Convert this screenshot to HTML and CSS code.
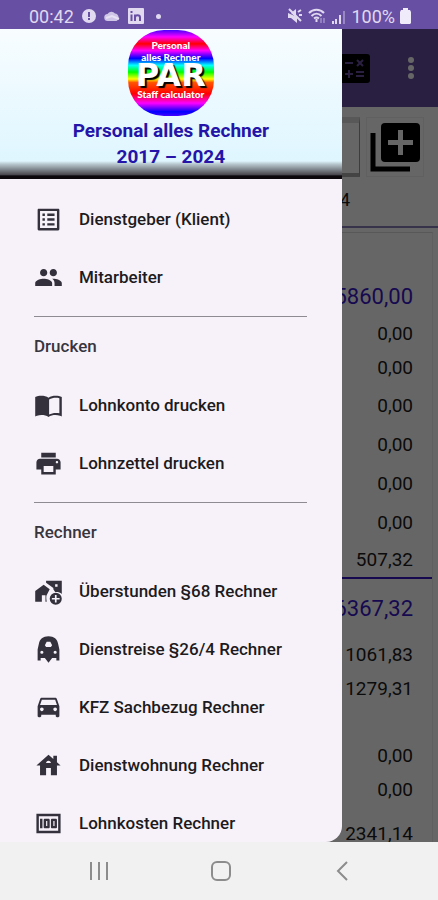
FILE: index.html
```html
<!DOCTYPE html>
<html lang="de">
  <head>
    <meta charset="UTF-8" />
    <meta name="viewport" content="width=device-width, initial-scale=1.0" />
    <title>Personal alles Rechner</title>
    <link rel="stylesheet" href="styles.css">
  </head>
  <body>
    <!-- status bar -->
    <header class="status">
      <span class="status-text">00:42</span>
      <svg width="14" height="14" viewBox="0 0 14 14"><circle cx="7" cy="7" r="7" fill="#e0d9f0"/><path d="M7 3v5M7 9v2" stroke="#6750a4" stroke-width="2"/></svg>
      <svg width="16" height="12" viewBox="0 0 16 12"><path d="M4 11a3.500 3.500 0 0 1-.5-7A4.500 4.500 0 0 1 11 3.500 4 4 0 0 1 12.500 11z" fill="#cfc5e6"/><path d="M2 8l6-2 7 3" stroke="#e6e0f3" stroke-width="2" fill="none"/></svg>
      <svg width="16" height="16" viewBox="0 0 16 16"><rect width="16" height="16" rx="1" fill="#e0d9f0"/><path d="M3.500 6.500V13M7 13V6.500M7 9.500c0-3 5-3 5 0V13M3.500 3v2" stroke="#6750a4" stroke-width="2" fill="none"/></svg>
      <span class="status-dot"></span>
      <span class="status-space"></span>
      <svg width="16" height="16" viewBox="0 0 16 16" fill="#e0d9f0"><path d="M1 5h3l5-4v8L4 5zM1 5v5h3l6 5V9z"/><path d="M2 1l12 12M11 4l3-2M12 7h3" stroke="#e0d9f0" stroke-width="2"/></svg>
      <svg width="18" height="16" viewBox="0 0 18 16" fill="none" stroke="#e0d9f0" stroke-width="2"><path d="M1 5c4-4.500 11-4.500 15 0M3.500 8c3-3 7-3 10 0M6 10.500c2-1.500 3-1.500 5 0"/><path d="M8.500 11v3"/><path d="M13 10v5M16 10v5" stroke-width="1" opacity=".7"/></svg>
      <svg width="15" height="15" viewBox="0 0 15 15" fill="#e0d9f0"><path d="M1 12h2v3H1zM4 10h2v5H4zM8 6h2v9H8z"/><path d="M12 2h2v13h-2z" opacity=".4"/></svg>
      <span class="status-text">100%</span>
      <svg width="11" height="16" viewBox="0 0 11 16" fill="#f0ebfa"><path d="M3 0h5v2h2l1 2v11l-1 1H1l-1-1V4l1-2h2z"/></svg>
    </header>

    <main class="screen">
      <!-- page under the drawer -->
      <div class="page">
        <div class="appbar">
          <button class="icon-btn" aria-label="Rechner">
            <svg width="31" height="29" viewBox="0 0 31 29"><rect width="31" height="29" rx="3"/><path d="M6 9h8M18 6l6 6M24 6l-6 6M6 20h8M10 16v8M17 18h8M17 22h8" stroke="#6750a4" stroke-width="2"/></svg>
          </button>
          <button class="icon-btn" aria-label="Menü">
            <svg width="6" height="22" viewBox="0 0 6 22" fill="#fff"><circle cx="3" cy="3" r="3"/><circle cx="3" cy="11" r="3"/><circle cx="3" cy="19" r="3"/></svg>
          </button>
        </div>
        <div class="tools">
          <input class="search" type="text" aria-label="Suche">
          <button class="add" aria-label="Hinzufügen">
            <svg width="50" height="50" viewBox="0 0 50 50"><rect x="11" y="1" width="39" height="39" rx="4"/><path d="M3 11v36h37" fill="none" stroke="#000" stroke-width="5"/><path d="M30.500 8v25M18 20.500h25" stroke="#fff" stroke-width="5"/></svg>
          </button>
        </div>
        <p class="year">2024</p>
        <div class="sheet">
          <table>
            <tr class="total"><td>5860,00</td></tr>
            <tr class="compact"><td>0,00</td></tr>
            <tr class="compact"><td>0,00</td></tr>
          </table>
          <table class="extras">
            <tr><td>0,00</td></tr>
            <tr><td>0,00</td></tr>
            <tr><td>0,00</td></tr>
            <tr><td>0,00</td></tr>
            <tr><td>507,32</td></tr>
          </table>
          <table>
            <tr class="total sum"><td>6367,32</td></tr>
            <tr class="compact"><td>1061,83</td></tr>
            <tr class="compact"><td>1279,31</td></tr>
          </table>
          <table class="taxes">
            <tr class="compact"><td>0,00</td></tr>
            <tr class="compact"><td>0,00</td></tr>
          </table>
          <table class="payout">
            <tr class="compact"><td>2341,14</td></tr>
          </table>
        </div>
      </div>
      <div class="scrim"></div>

      <!-- drawer -->
      <aside class="drawer">
        <div class="drawer-head">
          <div class="logo">
            <span class="logo-small">Personal</span>
            <span class="logo-small">alles Rechner</span>
            <span class="logo-big">PAR</span>
            <span class="logo-small">Staff calculator</span>
          </div>
          <h1 class="title">Personal alles Rechner<br>2017 – 2024</h1>
        </div>
        <nav class="menu">
          <a class="item" href="#">
            <svg class="icon" viewBox="0 0 24 24"><path d="M19 5v14H5V5h14m1.100-2H3.900c-.5 0-.9.4-.9.9v16.200c0 .4.4.9.9.9h16.200c.4 0 .9-.5.9-.9V3.900c0-.5-.5-.9-.9-.9zM11 7h6v2h-6V7zm0 4h6v2h-6v-2zm0 4h6v2h-6zM7 7h2v2H7zm0 4h2v2H7zm0 4h2v2H7z"/></svg>
            Dienstgeber (Klient)
          </a>
          <a class="item" href="#">
            <svg class="icon" viewBox="0 0 24 24"><path d="M16 11c1.660 0 2.990-1.340 2.990-3S17.660 5 16 5c-1.660 0-3 1.340-3 3s1.340 3 3 3zm-8 0c1.660 0 2.990-1.340 2.990-3S9.660 5 8 5C6.340 5 5 6.340 5 8s1.340 3 3 3zm0 2c-2.330 0-7 1.170-7 3.500V19h14v-2.500c0-2.330-4.670-3.500-7-3.500zm8 0c-.29 0-.62.02-.97.05 1.160.84 1.970 1.970 1.970 3.450V19h6v-2.500c0-2.330-4.670-3.500-7-3.500z"/></svg>
            Mitarbeiter
          </a>

          <h2 class="group">Drucken</h2>
          <a class="item" href="#">
            <svg class="icon" viewBox="0 0 24 24"><path fill-rule="evenodd" d="M12 5.500C9 3.500 4 3.500 1 5v16c.5-.3 1-.5 1.500-.6 3-.9 7-.7 9.500 1.100 2.500-1.800 6.500-2 9.500-1.100.5.1 1 .3 1.500.6V5c-3-1.500-8-1.500-11 .5zM21 18.500c-2.500-.7-6-.5-8.500 1V7c2.500-1.500 6-1.700 8.500-1z"/></svg>
            Lohnkonto drucken
          </a>
          <a class="item" href="#">
            <svg class="icon" viewBox="0 0 24 24"><path d="M19 8H5c-1.660 0-3 1.340-3 3v6h4v4h12v-4h4v-6c0-1.660-1.340-3-3-3zm-3 11H8v-5h8v5zm3-7c-.55 0-1-.45-1-1s.45-1 1-1 1 .45 1 1-.45 1-1 1zm-1-9H6v4h12V3z"/></svg>
            Lohnzettel drucken
          </a>

          <h2 class="group">Rechner</h2>
          <a class="item" href="#">
            <svg class="icon" viewBox="0 0 24 24"><path d="M1 11.500l7-5 5 3.700-2 3.800c-1 1-1 3-.5 6.500H9.500V15h-3v5.500H1z"/><path fill-rule="evenodd" d="M10 3h13v11c-1.500-1.300-3.500-1.800-5.500-1.500L16 10.200V9L10 4.700zM17.500 6v2h2V6z"/><path fill-rule="evenodd" d="M18 13a5 5 0 1 0 0 10 5 5 0 0 0 0-10zm-.7 1.800h1.400v2.500h2.500v1.400h-2.500v2.500h-1.400v-2.500h-2.500v-1.400h2.500z"/></svg>
            Überstunden §68 Rechner
          </a>
          <a class="item" href="#">
            <svg class="icon" viewBox="0 0 24 24"><path fill-rule="evenodd" d="M12 1c-4.500 0-7.500 2.500-8 6.500L3 12v9h2.500v-2H9l3 4 3-4h3.500v2H21v-9l-1-4.500C19.500 3.500 16.500 1 12 1zM10.500 5.500h3l1.500 3-1 1.500h-4L9 8.500zM6.500 13a1.300 1.300 0 1 1 0 2.600 1.300 1.300 0 0 1 0-2.600zm11 0a1.300 1.300 0 1 1 0 2.600 1.300 1.300 0 0 1 0-2.600z"/></svg>
            Dienstreise §26/4 Rechner
          </a>
          <a class="item" href="#">
            <svg class="icon" viewBox="0 0 24 24"><path d="M18.920 5.010C18.720 4.420 18.160 4 17.500 4h-11c-.66 0-1.210.42-1.420 1.010L3 11v8c0 .55.45 1 1 1h1c.55 0 1-.45 1-1v-1h12v1c0 .55.45 1 1 1h1c.55 0 1-.45 1-1v-8l-2.080-5.990zM6.500 15c-.83 0-1.500-.67-1.500-1.500S5.670 12 6.500 12s1.500.67 1.500 1.500S7.330 15 6.500 15zm11 0c-.83 0-1.500-.67-1.500-1.500s.67-1.500 1.500-1.500 1.500.67 1.500 1.500-.67 1.500-1.500 1.500zM5 10l1.500-4.500h11L19 10H5z"/></svg>
            KFZ Sachbezug Rechner
          </a>
          <a class="item" href="#">
            <svg class="icon" viewBox="0 0 24 24"><path d="M19 9.300V4h-3v2.600L12 3 2 12h3v8h5v-6h4v6h5v-8h3l-3-2.700zm-9 .7c0-1.100.9-2 2-2s2 .9 2 2h-4z"/></svg>
            Dienstwohnung Rechner
          </a>
          <a class="item" href="#">
            <svg class="icon" viewBox="0 0 24 24"><path d="M15 16h3c.55 0 1-.45 1-1V9c0-.55-.45-1-1-1h-3c-.55 0-1 .45-1 1v6c0 .55.45 1 1 1zm1-6h1v4h-1v-4zm-7 6h3c.55 0 1-.45 1-1V9c0-.55-.45-1-1-1H9c-.55 0-1 .45-1 1v6c0 .55.45 1 1 1zm1-6h1v4h-1v-4zM5 8h2v8H5zM2 4v16h20V4H2zm2 14V6h16v12H4z"/></svg>
            Lohnkosten Rechner
          </a>
        </nav>
      </aside>
    </main>

    <!-- system buttons -->
    <footer class="sysnav">
      <button class="sysbtn" aria-label="Letzte Apps">
        <svg width="20" height="20" viewBox="0 0 20 20"><path d="M2 1v18M10 1v18M18 1v18"/></svg>
      </button>
      <button class="sysbtn" aria-label="Start">
        <svg width="20" height="20" viewBox="0 0 20 20"><rect x="1" y="1" width="18" height="18" rx="5"/></svg>
      </button>
      <button class="sysbtn" aria-label="Zurück">
        <svg width="20" height="20" viewBox="0 0 20 20"><path d="M14 1L5 10l9 9"/></svg>
      </button>
    </footer>
  </body>
</html>
```
FILE: styles.css
```css
* {
  padding: 0;
  margin: 0;
  box-sizing: border-box;
}

body {
  height: 100vh;
  display: flex;
  flex-direction: column;
  font-family: Roboto, "Noto Sans", sans-serif;
  color: #1d1b20;
  background-color: #f1f1f1;
}

button {
  border: none;
  background: none;
}

svg {
  display: block;
  flex: none;
}

/* status bar */
.status {
  height: 29px;
  flex: none;
  display: flex;
  align-items: center;
  gap: 8px;
  padding: 3px 27px 0 29px;
  background-color: #6750a4;
}

.status-text {
  font-size: 18px;
  color: #e0d9f0;
}

.status-dot {
  width: 5px;
  height: 5px;
  margin-left: 4px;
  border-radius: 100%;
  background-color: #e0d9f0;
}

.status-space {
  flex: 1;
}

.status-space ~ * {
  margin-left: -3px;
}

.screen {
  flex: 1;
  min-height: 0;
  position: relative;
  overflow: hidden;
}

/* page */
.page {
  min-height: 100%;
  background-color: #fff;
}

.appbar {
  height: 78px;
  display: flex;
  justify-content: flex-end;
  align-items: center;
  gap: 38px;
  padding-right: 24px;
  background-color: #6750a4;
}

.tools {
  display: flex;
  gap: 6px;
  padding: 10px 14px 0;
}

.search {
  flex: 1;
  min-width: 0;
  height: 60px;
  border: 1px solid #999;
  border-top: 6px solid #ddd;
  border-bottom: 4px solid #aaa;
  background-color: #fff;
}

.add {
  width: 58px;
  height: 60px;
  display: flex;
  justify-content: center;
  align-items: center;
  border: 1px solid #f0f0f0;
}

.year {
  height: 51px;
  line-height: 46px;
  padding-right: 88px;
  text-align: right;
  font-size: 18px;
  border-bottom: 2px solid #8a80b8;
}

.sheet {
  margin: 4px 5px 0 0;
  padding-top: 44px;
  border-top: 1px solid #ddd;
  border-right: 1px solid #eee;
}

table {
  width: 100%;
  border-collapse: collapse;
}

td {
  height: 39px;
  padding-right: 19px;
  text-align: right;
  font-size: 19px;
}

.compact td {
  height: 34px;
}

.total td {
  font-size: 22px;
  color: #3a18c8;
}

.sum td {
  height: 58px;
}

.extras {
  margin-top: 2px;
  border-bottom: 2px solid #3a18c8;
}

.extras tr:last-child td {
  height: 36px;
}

.taxes {
  margin-top: 33px;
}

.payout {
  margin-top: 10px;
}

.scrim {
  position: absolute;
  inset: 0;
  background-color: rgba(0, 0, 0, 0.6);
}

/* drawer */
.drawer {
  position: absolute;
  top: 0;
  bottom: 0;
  left: 0;
  width: 78%;
  overflow: hidden;
  background-color: #f7f2fa;
  border-bottom-right-radius: 16px;
}

.drawer-head {
  height: 150px;
  display: flex;
  flex-direction: column;
  align-items: center;
  padding-top: 1px;
  background: linear-gradient(#f8fdff, #dff6ff 88%, #b8c8cf 90%, #4c4a50 97%, #0c080c 98%, #0c080c);
}

.logo {
  width: 86px;
  height: 86px;
  display: flex;
  flex-direction: column;
  align-items: center;
  padding-top: 9px;
  border-radius: 36px;
  font-family: Lato, sans-serif;
  font-weight: 900;
  color: #fff;
  white-space: nowrap;
  background: linear-gradient(
    #40f 0%,
    #f0f 8%,
    #f00 16%,
    #f0f 24%,
    #00f 33%,
    #0ff 41%,
    #0f0 49%,
    #ff0 57%,
    #f50 61%,
    #f00 74%,
    #f0f 85%,
    #00f 95%,
    #40f 100%
  );
}

.logo-small {
  font-size: 10px;
  line-height: 12px;
}

.logo-big {
  font-family: "DejaVu Sans", sans-serif;
  font-size: 32px;
  line-height: 25px;
  text-shadow: 2px 2px 1px #000;
}

.title {
  margin-top: 2px;
  font-size: 19px;
  line-height: 26px;
  font-weight: 700;
  text-align: center;
  color: #2414a8;
}

.menu {
  padding: 11px 35px 0 34px;
}

.item {
  height: 58px;
  display: flex;
  align-items: center;
  gap: 16px;
  font-size: 17px;
  font-weight: 500;
  color: #1d1b20;
  text-decoration: none;
  white-space: nowrap;
}

.icon {
  width: 29px;
  height: 29px;
  fill: #34313c;
}

.group {
  height: 60px;
  line-height: 59px;
  margin-top: 10px;
  border-top: 1px solid #8f8b93;
  font-size: 17px;
  font-weight: 500;
  color: #38353d;
}

/* system buttons */
.sysnav {
  height: 58px;
  flex: none;
  display: flex;
  justify-content: center;
  padding-left: 4px;
  background-color: #f1f1f1;
}

.sysbtn {
  width: 28%;
  display: flex;
  justify-content: center;
  align-items: center;
}

.sysbtn svg {
  fill: none;
  stroke: #8c8c8c;
  stroke-width: 2;
}
```
